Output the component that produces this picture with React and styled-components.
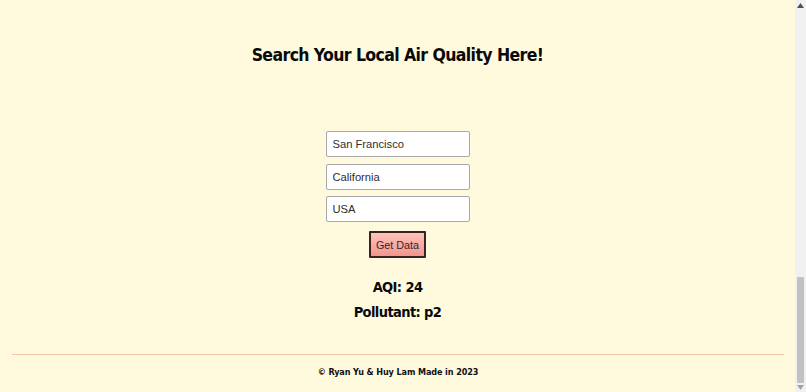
import React from 'react'
import styled, { createGlobalStyle } from 'styled-components'

const GlobalStyle = createGlobalStyle`
  html, body {
    margin: 0;
    background-color: #fff9de;
    font-family: "DejaVu Sans Condensed", "DejaVu Sans", sans-serif;
  }
`

const Shell = styled.div`
  display: flex;
  min-height: 392px;
`

const Page = styled.div`
  flex: 1;
  display: flex;
  flex-direction: column;
  align-items: center;
  padding: 44px 0 0;
`

const Title = styled.h1`
  margin: 0;
  font-size: 17.5px;
  line-height: 22px;
  font-weight: 700;
  letter-spacing: -0.6px;
  color: #0a0a0a;
`

const SearchForm = styled.form`
  display: flex;
  flex-direction: column;
  align-items: center;
  gap: 6.5px;
  margin-top: 65px;
`

const TextInput = styled.input`
  width: 144px;
  height: 26px;
  box-sizing: border-box;
  padding: 0 6px;
  border: 1px solid #a8a8a8;
  border-radius: 2px;
  background: #fff;
  font-family: "Liberation Sans", Arial, sans-serif;
  font-size: 11.2px;
  color: #2e2e2e;
  outline: none;
`

const GetButton = styled.button`
  margin-top: 2.5px;
  width: 57px;
  height: 27px;
  box-sizing: border-box;
  border: 2px solid #3b2222;
  border-radius: 1px;
  background: linear-gradient(#ffc2ba, #f3958c);
  font-family: "Liberation Sans", Arial, sans-serif;
  font-size: 10.8px;
  color: #2a2a2a;
  padding: 0;
`

const Stat = styled.p`
  margin: ${({ top }) => top}px 0 0;
  font-size: 14.5px;
  line-height: 20px;
  font-weight: 700;
  letter-spacing: -0.6px;
  color: #0a0a0a;
`

const Footer = styled.footer`
  margin-top: 32px;
  width: 100%;
  box-sizing: border-box;
  padding: 0 11px 0 12px;
  display: flex;
  flex-direction: column;
  align-items: center;
`

const Rule = styled.hr`
  width: 100%;
  margin: 0;
  border: none;
  border-top: 1px solid #f5c5ae;
`

const Credit = styled.p`
  margin: 10px 0 9px;
  font-size: 9px;
  line-height: 14px;
  font-weight: 700;
  letter-spacing: -0.1px;
  color: #111;
`

const ScrollTrack = styled.div`
  width: 11px;
  flex-shrink: 0;
  background: #f1f1f1;
  display: flex;
  flex-direction: column;
  align-items: center;
  justify-content: space-between;
  padding: 3px 0 2px;
  box-sizing: border-box;
`

const ScrollThumb = styled.div`
  width: 7px;
  height: 106px;
  margin-top: auto;
  margin-bottom: 2px;
  border-radius: 1px;
  background: #c1c1c1;
`

const Arrow = styled.svg`
  display: block;
  width: 7px;
  height: 5px;
  fill: ${({ dim }) => (dim ? '#a3a3a3' : '#505050')};
`

export default function App() {
  return (
    <>
      <GlobalStyle />
      <Shell>
        <Page>
          <Title>Search Your Local Air Quality Here!</Title>
          <SearchForm onSubmit={(e) => e.preventDefault()}>
            <TextInput defaultValue="San Francisco" />
            <TextInput defaultValue="California" />
            <TextInput defaultValue="USA" />
            <GetButton type="submit">Get Data</GetButton>
          </SearchForm>
          <Stat top={19}>AQI: 24</Stat>
          <Stat top={5}>Pollutant: p2</Stat>
          <Footer>
            <Rule />
            <Credit>© Ryan Yu &amp; Huy Lam Made in 2023</Credit>
          </Footer>
        </Page>
        <ScrollTrack>
          <Arrow viewBox="0 0 7 5"><path d="M3.5 0 L7 5 L0 5 Z" /></Arrow>
          <ScrollThumb />
          <Arrow dim viewBox="0 0 7 5"><path d="M0 0 L7 0 L3.5 5 Z" /></Arrow>
        </ScrollTrack>
      </Shell>
    </>
  )
}
